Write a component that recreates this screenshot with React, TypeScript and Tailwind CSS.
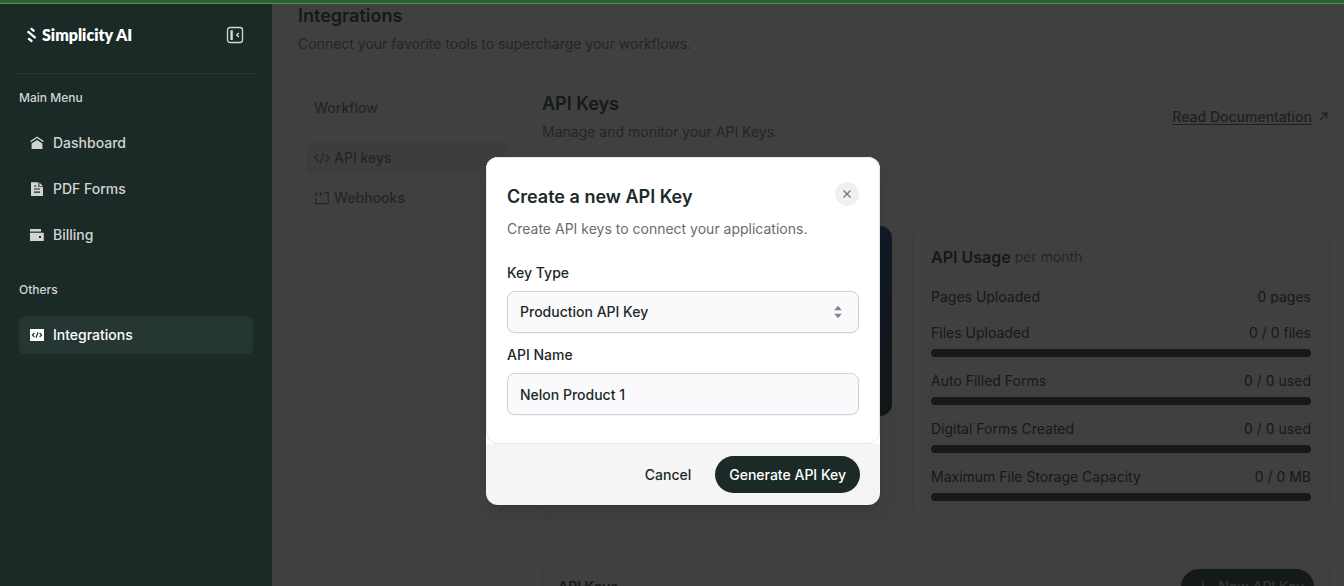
import React from "react";

type IconProps = { className?: string };

function LogoMark() {
  return (
    <svg className="h-4 w-[10px] shrink-0" viewBox="0 0 10 16" fill="none" stroke="#fff" strokeWidth="2.300" strokeLinecap="round" aria-hidden="true">
      <path d="M5.400 1.900 7.600 3.700" />
      <path d="M2.300 4.900 8.800 10.400" />
      <path d="M2.900 11.900 5.500 14" />
    </svg>
  );
}

function CollapseIcon() {
  return (
    <svg className="size-[18px]" viewBox="0 0 18 18" fill="none" stroke="#d5d9d8" aria-hidden="true">
      <rect x="1.500" y="1.500" width="15" height="15" rx="2.600" strokeWidth="1.300" />
      <path d="M5.600 4.200V14" strokeWidth="2.400" />
      <path d="M12.800 7 10.800 9l2 2" strokeWidth="1.400" />
    </svg>
  );
}

function HomeIcon({ className }: IconProps) {
  return (
    <svg className={className} viewBox="0 0 14 14" aria-hidden="true">
      <path d="M.6 5.600 7 1.300l6.400 4.300" fill="none" stroke="currentColor" strokeWidth="1.300" />
      <path d="M7 3.900 12.400 7.400V13H1.600V7.400Z" fill="currentColor" />
    </svg>
  );
}

function DocumentIcon({ className }: IconProps) {
  return (
    <svg className={className} viewBox="0 0 14 14" aria-hidden="true">
      <path fillRule="evenodd" clipRule="evenodd" d="M1 .2h7.400v4.600h4.600V14H1ZM4 3.400v1.200h2.400V3.400ZM4 6.400v1.200h6V6.400ZM4 9.600v1.200h6V9.600Z" fill="currentColor" />
      <path d="M9.400.4 12.900 3.900H9.400Z" fill="currentColor" />
    </svg>
  );
}

function WalletIcon({ className }: IconProps) {
  return (
    <svg className={className} viewBox="0 0 14 14" aria-hidden="true">
      <path d="M0 1h11v2.600H0Z" fill="currentColor" />
      <path fillRule="evenodd" clipRule="evenodd" d="M0 4.800h13.800V13H0ZM9 8v2h2V8Z" fill="currentColor" />
    </svg>
  );
}

function CodeSquareIcon({ className }: IconProps) {
  return (
    <svg className={className} viewBox="0 0 14 14" aria-hidden="true">
      <path d="M0 1h14v12H0Z" fill="currentColor" />
      <path d="M4.400 5 2.400 7l2 2M9.600 5l2 2-2 2M8 4.200 6 9.800" fill="none" stroke="#263632" strokeWidth="1.200" />
    </svg>
  );
}

function CodeIcon() {
  return (
    <svg className="h-4 w-4" viewBox="0 0 16 16" fill="none" stroke="currentColor" strokeWidth="1.200" aria-hidden="true">
      <path d="M4.200 4.500.8 8l3.400 3.500M11.800 4.500 15.200 8l-3.400 3.500M9.800 2.600 6.200 13.400" />
    </svg>
  );
}

function WebhookIcon() {
  return (
    <svg className="h-4 w-4" viewBox="0 0 16 16" fill="none" stroke="currentColor" strokeWidth="1.200" aria-hidden="true">
      <path d="M10 2.600h4.200v11H1.600V8" />
      <path d="M3.200 2.200 1.400 4l1.800 1.800M5.800 2.200 7.600 4 5.800 5.800" />
    </svg>
  );
}

function NavItem({ icon: Icon, label, active = false }: { icon: React.ComponentType<IconProps>; label: string; active?: boolean }) {
  return (
    <a
      href="#"
      className={
        active
          ? "flex h-[38px] items-center gap-[9px] rounded-md bg-[#263632] px-[11px] text-sm font-medium text-white"
          : "flex h-[38px] items-center gap-[9px] rounded-md px-[11px] text-sm font-medium text-[#d1d4d4]"
      }
    >
      <Icon className="size-[14px]" />
      {label}
    </a>
  );
}

function Sidebar() {
  return (
    <aside className="relative z-20 w-[272px] shrink-0 bg-[#1b2a27] px-[19px] pt-[22px]">
      <div className="flex h-[26px] items-center justify-between pr-[9px] pl-[7px]">
        <div className="flex items-center gap-[6px] font-['Lato',sans-serif] text-base font-extrabold text-white">
          <LogoMark />
          Simplicity AI
        </div>
        <button type="button" aria-label="Collapse sidebar">
          <CollapseIcon />
        </button>
      </div>
      <hr className="-mx-[2px] mt-[25px] border-[#293734]" />
      <h2 className="mt-4 text-xs leading-4 font-medium text-[#d1d4d4]">Main Menu</h2>
      <nav className="mt-[18px] flex flex-col gap-2">
        <NavItem icon={HomeIcon} label="Dashboard" />
        <NavItem icon={DocumentIcon} label="PDF Forms" />
        <NavItem icon={WalletIcon} label="Billing" />
      </nav>
      <h2 className="mt-7 text-xs leading-4 font-medium text-[#d1d4d4]">Others</h2>
      <nav className="mt-[18px]">
        <NavItem icon={CodeSquareIcon} label="Integrations" active />
      </nav>
    </aside>
  );
}

const usage = [
  { label: "Files Uploaded", value: "0 / 0 files" },
  { label: "Auto Filled Forms", value: "0 / 0 used" },
  { label: "Digital Forms Created", value: "0 / 0 used" },
  { label: "Maximum File Storage Capacity", value: "0 / 0 MB" },
];

function UsageCard() {
  return (
    <section className="rounded-xl border border-[#e6e6e6] px-[18px] pt-5 pb-[19px] text-sm leading-5 text-[#1f4138]">
      <div className="flex items-center gap-1">
        <h3 className="text-base leading-5 font-semibold">API Usage</h3>
        <span className="text-[#777]">per month</span>
      </div>
      <div className="mt-5 flex justify-between">
        <span>Pages Uploaded</span>
        <span>0 pages</span>
      </div>
      {usage.map((row) => (
        <div key={row.label} className="mt-4">
          <div className="flex justify-between">
            <span>{row.label}</span>
            <span>{row.value}</span>
          </div>
          <div className="mt-[6px] mb-[-2px] h-2 rounded-full bg-[#1f4138]" />
        </div>
      ))}
    </section>
  );
}

function Page() {
  return (
    <main className="min-w-0 flex-1 pt-[6px] pr-[14px] pl-[26px]">
      <h1 className="text-lg leading-5 font-semibold text-[#1f4138]">Integrations</h1>
      <p className="mt-2 text-sm leading-5 text-[#777]">Connect your favorite tools to supercharge your workflows.</p>
      <div className="mt-[38px] flex gap-8">
        <nav className="ml-2 w-[204px] shrink-0 text-sm font-medium text-[#777]">
          <a href="#" className="flex h-8 items-center px-2">Workflow</a>
          <a href="#" className="mt-[18px] flex h-8 items-center gap-1 rounded-md bg-[#f0f0f0] px-2">
            <CodeIcon />
            API keys
          </a>
          <a href="#" className="mt-2 flex h-8 items-center gap-1 px-2">
            <WebhookIcon />
            Webhooks
          </a>
        </nav>
        <div className="min-w-0 flex-1">
          <div className="flex items-center justify-between">
            <div>
              <h2 className="mt-[2px] text-lg leading-5 font-semibold text-[#1f4138]">API Keys</h2>
              <p className="mt-2 text-sm leading-5 text-[#777]">Manage and monitor your API Keys.</p>
            </div>
            <a href="#" className="flex items-center gap-[6px] text-sm leading-5 font-medium text-[#606060]">
              <span className="underline underline-offset-2">Read Documentation</span>
              <svg className="size-3" viewBox="0 0 12 12" fill="none" stroke="currentColor" strokeWidth="1.200" aria-hidden="true">
                <path d="M2 9 8.500 2.500M3.500 2.200h5.300v5.300" />
              </svg>
            </a>
          </div>
          <div className="mt-[84px] grid grid-cols-[350fr_418fr] gap-5">
            <section className="rounded-xl border border-[#e6e6e6]">
              <div className="-m-px h-[190px] rounded-xl bg-linear-to-b from-[#14407f] to-[#1f3138]" />
            </section>
            <UsageCard />
          </div>
          <section className="mt-[35px] flex h-40 items-start justify-between rounded-xl border border-[#e6e6e6] px-[15px] pt-[14px]">
            <h3 className="pt-2 text-sm leading-5 font-semibold text-[#1f4138]">API Keys</h3>
            <button type="button" className="flex h-9 items-center gap-2 rounded-full bg-[#1f4138] px-[10px] text-sm font-medium text-[#c8c8c8]">
              <svg className="size-5" viewBox="0 0 20 20" fill="none" stroke="currentColor" strokeWidth="1.500" aria-hidden="true">
                <path d="M12 4v14M5 11h14" />
              </svg>
              New API Key
            </button>
          </section>
        </div>
      </div>
    </main>
  );
}

function CreateKeyDialog() {
  return (
    <div className="absolute inset-0 z-10 flex items-start justify-center bg-[#101010]/80 pt-[157px] pl-[22px]">
      <div role="dialog" aria-labelledby="dialog-title" className="w-[394px] overflow-hidden rounded-xl bg-[#f5f5f5] text-sm text-[#1b2a27] shadow-lg">
        <div className="bg-white">
          <div className="rounded-xl border border-[#e8e8ea] bg-white px-5 pt-6 pb-7">
            <div className="flex items-start justify-between">
              <h2 id="dialog-title" className="pt-[3px] text-lg leading-6 font-semibold">Create a new API Key</h2>
              <button type="button" aria-label="Close" className="flex size-6 items-center justify-center rounded-full bg-[#f0f0f2] text-[#717171]">
                <svg className="size-2" viewBox="0 0 8 8" fill="none" stroke="currentColor" strokeWidth="1.200" aria-hidden="true">
                  <path d="m.5.5 7 7M7.500.5l-7 7" />
                </svg>
              </button>
            </div>
            <p className="mt-[10px] leading-5 text-[#6b6b6f]">Create API keys to connect your applications.</p>
            <label htmlFor="key-type" className="mt-6 block leading-5 font-medium">Key Type</label>
            <div className="relative mt-2">
              <select id="key-type" className="block h-[42px] w-full appearance-none rounded-lg border border-[#d0d0d8] bg-[#fafafc] px-3 font-medium shadow-xs">
                <option>Production API Key</option>
              </select>
              <svg className="pointer-events-none absolute top-[14px] right-[17px] h-[14px] w-2" viewBox="0 0 8 14" fill="#85858f" aria-hidden="true">
                <path d="M4 .8 7.800 5.300H.2ZM4 13.200.2 8.700h7.600Z" />
              </svg>
            </div>
            <label htmlFor="api-name" className="mt-3 block leading-5 font-medium">API Name</label>
            <input id="api-name" type="text" defaultValue="Nelon Product 1" className="mt-2 block h-[42px] w-full rounded-lg border border-[#d0d0d8] bg-[#fafafc] px-3 font-medium shadow-xs" />
          </div>
        </div>
        <div className="flex items-center justify-end gap-2 px-5 py-3">
          <button type="button" className="h-[37px] px-4 font-medium">Cancel</button>
          <button type="button" className="h-[37px] rounded-full bg-[#1b2a27] px-[14px] font-medium text-white">Generate API Key</button>
        </div>
      </div>
    </div>
  );
}

export default function App() {
  return (
    <div className="relative flex h-screen overflow-hidden bg-white font-['Inter',sans-serif]">
      <div className="absolute inset-x-0 top-0 z-30 h-1 border-b border-[#5b8a5c] bg-[#27632b]" />
      <Sidebar />
      <Page />
      <CreateKeyDialog />
    </div>
  );
}
